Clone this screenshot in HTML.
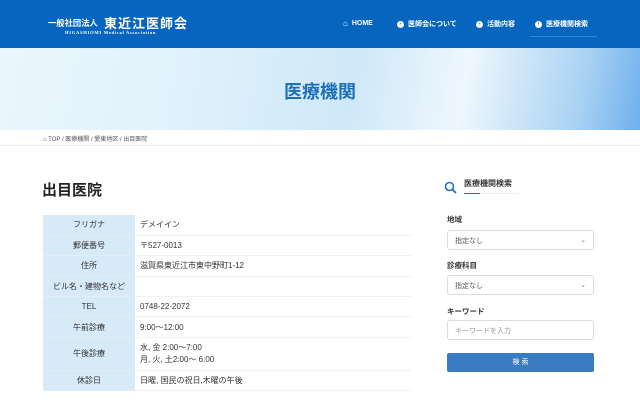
<!DOCTYPE html>
<html><head><meta charset="utf-8"><style>
*{margin:0;padding:0;box-sizing:border-box}
body{width:640px;height:400px;overflow:hidden;background:#fff;font-family:"Liberation Sans","Noto Sans CJK JP",sans-serif;color:#333;position:relative}
.hdr{position:absolute;left:0;top:0;width:640px;height:48px;background:#0565bf;color:#fff}
.abs{position:absolute;white-space:nowrap}
.nav{position:absolute;top:19px;font-size:7px;font-weight:bold;display:flex;align-items:center;gap:4px}
.ic{width:7px;height:7px;border-radius:50%;background:#fff;color:#0565bf;font-size:5px;line-height:7px;text-align:center;display:inline-block}
.hero{position:absolute;top:48px;left:0;width:640px;height:82px;background:linear-gradient(100deg,#eaf6fc 0%,#dff1fb 30%,#cfe8f8 55%,#eef7fd 72%,#a9d2f3 90%,#6fb0ec 100%)}
.bc{position:absolute;top:130px;left:0;width:640px;height:16px;background:#fff;border-bottom:1px solid #eee;font-size:6px;color:#555}
table{position:absolute;left:43px;top:215px;width:369px;border-collapse:collapse;font-size:8px}
td{border-bottom:1px solid #eef2f5;height:20.4px;padding:0 5px;color:#333}
td.l{background:#d6eaf8;width:92px;text-align:center;border-bottom:1px solid #e6eef5}
.sel{position:absolute;left:447px;width:147px;height:20px;border:1px solid #dcdcdc;border-radius:3px;font-size:7px;color:#555;padding:5px 7px}
.lab{position:absolute;left:447px;font-size:7.5px;font-weight:bold;color:#333}
</style></head><body>
<div class="hdr">
 <div class="abs" style="left:48px;top:17px;font-size:8.3px;font-weight:bold">一般社団法人</div>
 <div class="abs" style="left:104px;top:13px;font-size:13px;font-weight:bold;letter-spacing:1px">東近江医師会</div>
 <div class="abs" style="left:65px;top:30px;font-size:4.6px;font-family:'Liberation Serif',serif;font-weight:bold;letter-spacing:0.7px">HIGASHIOMI Medical Association</div>
 <div class="nav" style="left:343px"><span style="font-size:8px">⌂</span>HOME</div>
 <div class="nav" style="left:397px"><span class="ic">›</span>医師会について</div>
 <div class="nav" style="left:476px"><span class="ic">›</span>活動内容</div>
 <div class="nav" style="left:535px"><span class="ic">›</span>医療機関検索</div>
 <div class="abs" style="left:530px;top:36px;width:67px;height:1px;background:#3a82cc"></div>
</div>
<div class="hero"><div class="abs" style="left:284px;top:30px;font-size:18px;font-weight:bold;color:#1d6fb8">医療機関</div></div>
<div class="bc"><div class="abs" style="left:43px;top:4px">⌂ TOP / 医療機関 / 愛東地区 / 出目医院</div></div>
<div class="abs" style="left:42px;top:179px;font-size:15px;font-weight:bold;color:#222">出目医院</div>
<table>
<tr><td class="l">フリガナ</td><td>デメイイン</td></tr>
<tr><td class="l">郵便番号</td><td>〒527-0013</td></tr>
<tr><td class="l">住所</td><td>滋賀県東近江市東中野町1-12</td></tr>
<tr><td class="l">ビル名・建物名など</td><td></td></tr>
<tr><td class="l">TEL</td><td>0748-22-2072</td></tr>
<tr><td class="l">午前診療</td><td>9:00〜12:00</td></tr>
<tr><td class="l" style="height:33px">午後診療</td><td style="line-height:12px">水, 金 2:00〜7:00<br>月, 火, 土2:00〜 6:00</td></tr>
<tr><td class="l">休診日</td><td>日曜, 国民の祝日,木曜の午後</td></tr>
</table>
<svg class="abs" style="left:444px;top:181px" width="13" height="13" viewBox="0 0 13 13"><circle cx="5.5" cy="5.5" r="4" fill="none" stroke="#1d6fb8" stroke-width="1.6"/><path d="M8.5 8.5L12 12" stroke="#1d6fb8" stroke-width="1.8"/></svg>
<div class="abs" style="left:464px;top:178px;font-size:8px;font-weight:bold;color:#333">医療機関検索</div>
<div class="abs" style="left:464px;top:193px;width:55px;height:1px;background:#eee"></div>
<div class="abs" style="left:464px;top:193px;width:16px;height:1px;background:#1d6fb8"></div>
<div class="lab" style="top:214px">地域</div>
<div class="sel" style="top:230px">指定なし<span style="float:right;color:#888">⌄</span></div>
<div class="lab" style="top:260px">診療科目</div>
<div class="sel" style="top:275px">指定なし<span style="float:right;color:#888">⌄</span></div>
<div class="lab" style="top:306px">キーワード</div>
<div class="sel" style="top:320px;color:#999">キーワードを入力</div>
<div class="abs" style="left:447px;top:353px;width:147px;height:19px;background:#3a7cc0;border-radius:2px;color:#fff;font-size:7px;text-align:center;line-height:19px">検 索</div>
</body></html>
